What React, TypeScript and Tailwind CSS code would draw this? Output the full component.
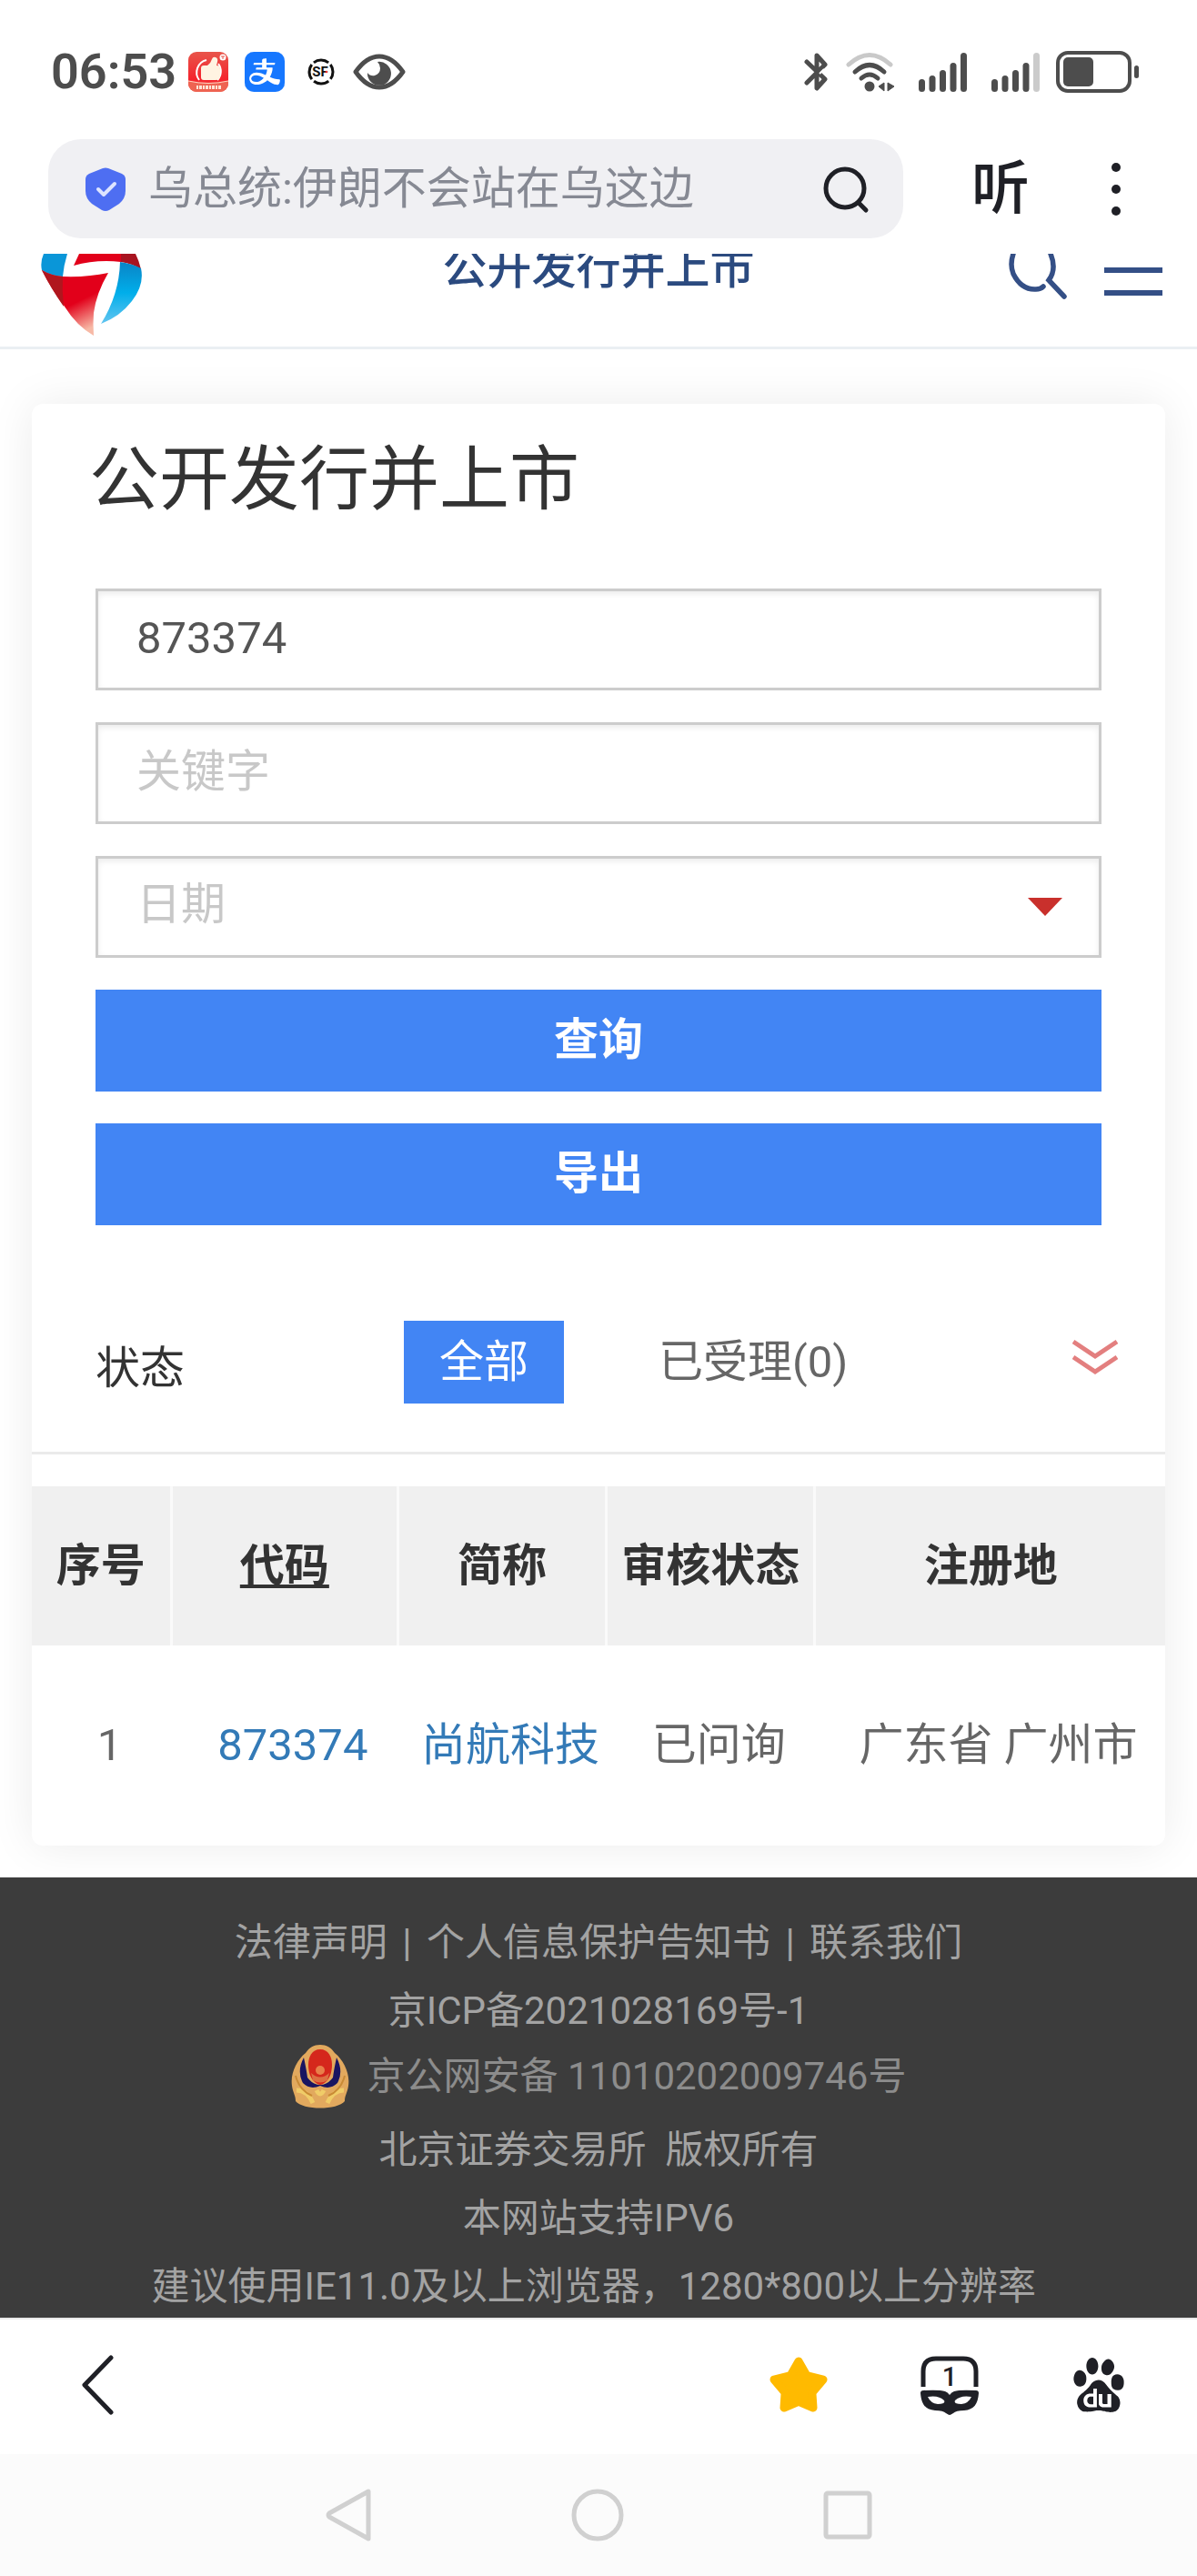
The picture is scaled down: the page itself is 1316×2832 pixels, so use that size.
import { useState } from "react";
import { AiFillAlipaySquare } from "react-icons/ai";
import { SiBaidu } from "react-icons/si";

function RewardsAppIcon() {
  return (
    <svg className="size-11" viewBox="0 0 44 44">
      <defs>
        <linearGradient id="rewards" x1="0" y1="0" x2="0" y2="1">
          <stop offset="0" stopColor="#e8554a" />
          <stop offset="0.7" stopColor="#f5222d" />
          <stop offset="1" stopColor="#f0604e" />
        </linearGradient>
      </defs>
      <rect width="44" height="44" rx="9" fill="url(#rewards)" />
      <path d="M0 32q22 5 44 0v3a9 9 0 0 1-9 9H9a9 9 0 0 1-9-9z" fill="#ee6352" />
      <path d="M0 32q22 5 44 0" stroke="#ffd9c4" fill="none" />
      <path d="M12 31a14 14 0 0 1 8-22M33 13a14 14 0 0 1-1 18" stroke="#fff" strokeWidth="2" fill="none" />
      <path
        d="M14 18q0-3 3-3h4q4-3 5-7 1-3 4-2 3 1 2 5l-1 4q4 0 4 4v7q0 5-5 5H17q-3 0-3-3z"
        fill="#fff3e2"
      />
      <circle cx="38" cy="6" r="3.5" fill="#fff" />
      <path d="M36 5h4M38 5v3" stroke="#e8554a" />
      <path d="M9 39h27" stroke="#ffe6d8" strokeWidth="4" strokeDasharray="2 1 3 1" />
    </svg>
  );
}

function StatusBar() {
  return (
    <div className="flex h-[153px] items-start justify-between pl-14 pr-[63px] pt-[56px] text-[#4d4d4d]">
      <div className="flex h-[46px] items-center">
        <span className="w-[151px] text-[54px] font-semibold leading-[46px]">06:53</span>
        <RewardsAppIcon />
        <span className="ml-[18px] flex size-11 items-center justify-center overflow-hidden rounded-[10px] bg-[#1677ff]">
          <AiFillAlipaySquare className="size-[60px] shrink-0 bg-white text-[#1677ff]" />
        </span>
        <svg className="ml-[25px] size-[30px]" viewBox="0 0 30 30">
          <circle
            cx="15"
            cy="15"
            r="13"
            fill="none"
            stroke="#111"
            strokeWidth="3"
            strokeDasharray="17.4 3"
            strokeDashoffset="9"
          />
          <text x="14" y="20" fontSize="15" fontWeight="700" textAnchor="middle" fill="#111">
            SF
          </text>
          <circle cx="21" cy="15" r="1.3" fill="#e33" />
        </svg>
        <svg className="ml-5 h-10 w-[58px]" viewBox="0 0 58 40">
          <path
            d="M3 20Q15 3 29 3t26 17Q43 37 29 37T3 20z"
            fill="none"
            stroke="currentColor"
            strokeWidth="5"
            strokeLinejoin="round"
          />
          <path d="M27 9a13 13 0 1 1-11 12q3 4 8 3 6-2 6-8 0-4-3-7z" fill="currentColor" />
        </svg>
      </div>

      <div className="flex h-[46px] items-center">
        <svg className="h-11 w-7" viewBox="0 0 28 44">
          <path
            d="M3 11l20 19-9 10V4l9 10L3 34"
            fill="none"
            stroke="currentColor"
            strokeWidth="5"
            strokeLinecap="round"
            strokeLinejoin="round"
          />
          <path d="M17 24l5-5" stroke="#fff" strokeWidth="2" />
        </svg>
        <svg className="ml-[17px] h-11 w-14" viewBox="0 0 56 44">
          <g fill="none" strokeWidth="5" strokeLinecap="round">
            <path d="M4 14q23-21 46 0" stroke="#c9c9c9" />
            <path d="M11 22q16-15 32 0" stroke="currentColor" />
            <path d="M18 29q9-8 18 0" stroke="currentColor" />
          </g>
          <circle cx="27" cy="38" r="5.5" fill="currentColor" />
          <path d="M43 34v9l-6-5zM47 34v9l7-5z" fill="currentColor" stroke="currentColor" />
        </svg>
        <Signal className="ml-[25px]" weak={false} />
        <Signal className="ml-[26px]" weak />
        <svg className="ml-[17px] h-[46px] w-[92px]" viewBox="0 0 92 46">
          <rect x="2" y="2" width="79" height="42" rx="11" fill="none" stroke="currentColor" strokeWidth="4" />
          <rect x="8" y="7" width="33" height="32" rx="5" fill="currentColor" />
          <rect x="86" y="16" width="5" height="14" rx="2.5" fill="currentColor" />
        </svg>
      </div>
    </div>
  );
}

function Signal({ className, weak }: { className: string; weak: boolean }) {
  return (
    <svg className={`h-[43px] w-[54px] ${className}`} viewBox="0 0 54 43" fill="currentColor">
      <rect x="0" y="29" width="7" height="14" rx="3.5" />
      <rect x="11.5" y="25" width="7" height="18" rx="3.5" />
      <rect x="23" y="19" width="7" height="24" rx="3.5" />
      <rect x="34.5" y="11" width="7" height="32" rx="3.5" />
      <rect x="46" y="0" width="7" height="43" rx="3.5" fill={weak ? "#cbcbcb" : "currentColor"} />
    </svg>
  );
}

function AddressBar() {
  return (
    <div className="flex h-[126px] items-start pl-[53px] pr-[78px]">
      <div className="flex h-[109px] flex-1 items-center rounded-[36px] bg-[#f0f0f3] pl-10 pr-9">
        <svg className="h-[50px] w-[46px]" viewBox="0 0 46 50">
          <path
            d="M20 2q3-1 6 0l15 6q4 2 4 6v13q0 8-7 14l-11 7q-4 2-8 0L8 41q-7-6-7-14V14q0-4 4-6z"
            fill="#4e6ef2"
          />
          <path
            d="M15 25l6 6 12-12"
            fill="none"
            stroke="#dde4ff"
            strokeWidth="4"
            strokeLinecap="round"
            strokeLinejoin="round"
          />
        </svg>
        <input
          type="text"
          aria-label="搜索或输入网址"
          defaultValue="乌总统:伊朗不会站在乌这边"
          className="ml-6 min-w-0 flex-1 bg-transparent text-[49px] leading-[64px] text-[#868993] outline-none"
        />
        <button type="button" aria-label="搜索">
          <svg className="size-[54px]" viewBox="0 0 54 54" fill="none" stroke="#1f2026" strokeWidth="5">
            <circle cx="26" cy="26" r="21" />
            <path d="M41 42l8 8" strokeLinecap="round" />
          </svg>
        </button>
      </div>
      <button type="button" className="ml-[75px] h-[109px] text-[64px] font-medium leading-[109px] text-[#1f2026]">
        听
      </button>
      <button type="button" aria-label="更多" className="ml-20 flex h-[109px] w-[26px] items-center">
        <svg className="h-[60px] w-[26px]" viewBox="0 0 26 60" fill="#1f2026">
          <circle cx="15" cy="6" r="5" />
          <circle cx="15" cy="30" r="5" />
          <circle cx="15" cy="54" r="5" />
        </svg>
      </button>
    </div>
  );
}

// The page is scrolled a little, so the top of the site header is cut off.
function SiteHeader() {
  return (
    <header className="flex h-[105px] items-start justify-between overflow-hidden border-b-[3px] border-[#eaeff3] pl-[45px] pr-[38px] text-[#2b4a7f]">
      <a href="#" aria-label="首页" className="w-[162px]">
        <svg className="h-[90px] w-[112px]" viewBox="0 0 112 90">
          <defs>
            <linearGradient id="logoRed" x1="0" y1="0" x2="0.5" y2="1">
              <stop offset="0.6" stopColor="#e2001a" />
              <stop offset="1" stopColor="#f7b9a6" />
            </linearGradient>
            <linearGradient id="logoBlue" x1="0" y1="0" x2="0" y2="1">
              <stop offset="0" stopColor="#0a84c6" />
              <stop offset="0.5" stopColor="#00aeea" />
              <stop offset="1" stopColor="#63c5f0" />
            </linearGradient>
          </defs>
          <path d="M3 0h26q-4 13-5 25Q10 24 1 18-1 9 3 0z" fill="#0a96d8" />
          <path d="M1 18q10 6 23 7 27 1 50-4-13 22-16 44-1 12 0 25Q39 79 26 58 11 38 1 18z" fill="url(#logoRed)" />
          <path d="M1 18q10 6 23 7-1 16 1 33Q11 38 1 18z" fill="#b0161e" />
          <path d="M42 0h46v9Q61 6 36 13z" fill="#e2001a" />
          <path d="M88 0h16q4 8 6 17-9-6-22-8z" fill="#a81420" />
          <path d="M87 9q14 2 23 7 4 18-10 36-13 17-34 25Q86 45 87 9z" fill="url(#logoBlue)" />
        </svg>
      </a>
      <h2 className="-mt-2 text-[49px] font-medium leading-[50px]">公开发行并上市</h2>
      <div className="flex w-[169px] justify-between">
        <button type="button" aria-label="站内搜索">
          <svg className="h-[50px] w-[66px]" viewBox="0 0 66 50" fill="none" stroke="#344f86" strokeWidth="5.5" strokeLinecap="round">
            <path d="M5 0Q1 12 5 22q9 18 25 17 5 0 8-3M46 0q7 17-2 29l17 18" />
          </svg>
        </button>
        <button type="button" aria-label="菜单">
          <svg className="h-[50px] w-16" viewBox="0 0 64 50" stroke="#344f86" strokeWidth="6">
            <path d="M0 18h64M0 43h64" />
          </svg>
        </button>
      </div>
    </header>
  );
}

function SearchForm() {
  const [code, setCode] = useState("873374");
  const [keyword, setKeyword] = useState("");
  const [date, setDate] = useState("");

  const field =
    "block h-28 w-full appearance-none border-[3px] border-[#ccc] bg-white px-[42px] pb-1 text-[49px] text-[#555] shadow-[inset_0_3px_6px_rgba(0,0,0,0.08)] outline-none placeholder:text-[#c8c8c8]";
  const action = "h-28 bg-[#4285f4] text-[49px] font-bold text-white";

  return (
    <form className="mt-[77px] flex flex-col gap-[35px] px-[70px]" onSubmit={(e) => e.preventDefault()}>
      <input
        type="text"
        aria-label="代码"
        className={field}
        value={code}
        onChange={(e) => setCode(e.target.value)}
      />
      <input
        type="text"
        aria-label="关键字"
        placeholder="关键字"
        className={field}
        value={keyword}
        onChange={(e) => setKeyword(e.target.value)}
      />
      <div className="relative">
        <select
          aria-label="日期"
          className={`${field} ${date ? "" : "text-[#c8c8c8]"}`}
          value={date}
          onChange={(e) => setDate(e.target.value)}
        >
          <option value="">日期</option>
        </select>
        <svg
          className="pointer-events-none absolute right-[42px] top-[45px] h-[21px] w-10"
          viewBox="0 0 40 21"
          fill="#c9302c"
        >
          <path d="M1 1h38L20 21z" />
        </svg>
      </div>
      <button type="submit" className={action}>
        查询
      </button>
      <button type="button" className={action}>
        导出
      </button>
    </form>
  );
}

function StatusFilter() {
  return (
    <div className="mt-[105px] grid h-[147px] grid-cols-[339fr_280fr_505fr] items-start border-b-[3px] border-[#eaeaea] pl-[70px] pr-[52px] text-[49px]">
      <span className="leading-[106px] text-[#333]">状态</span>
      <button type="button" className="w-44 justify-self-start bg-[#4285f4] leading-[91px] text-white">
        全部
      </button>
      <div className="flex items-start justify-between">
        <button type="button" className="leading-[91px] text-[#666]">
          已受理(0)
        </button>
        <button type="button" aria-label="展开" className="mt-5">
          <svg className="h-10 w-[50px]" viewBox="0 0 50 40" fill="none" stroke="#e37f7f" strokeWidth="5">
            <path d="M1 3l24 16L49 3M1 20l24 16 24-16" />
          </svg>
        </button>
      </div>
    </div>
  );
}

function ResultTable() {
  const th = "border-r-[3px] border-[#fafafa] last:border-r-0";
  const td = "pl-[18px]";

  return (
    <table className="mt-[35px] w-full table-fixed text-center text-[49px] text-[#666]">
      <colgroup>
        <col className="w-[12.3%]" />
        <col className="w-[20%]" />
        <col className="w-[18.4%]" />
        <col className="w-[18.4%]" />
        <col />
      </colgroup>
      <thead>
        <tr className="h-[175px] whitespace-nowrap bg-[#f0f0f0] text-[#333]">
          <th className={th}>序号</th>
          <th className={th}>
            <button type="button" className="underline underline-offset-4">
              代码
            </button>
          </th>
          <th className={th}>简称</th>
          <th className={th}>审核状态</th>
          <th className={th}>注册地</th>
        </tr>
      </thead>
      <tbody>
        <tr className="h-[220px] whitespace-nowrap">
          <td className={td}>1</td>
          <td className={td}>
            <a href="#" className="text-[#337ab7]">
              873374
            </a>
          </td>
          <td className={td}>
            <a href="#" className="text-[#337ab7]">
              尚航科技
            </a>
          </td>
          <td className={td}>已问询</td>
          <td className={td}>广东省 广州市</td>
        </tr>
      </tbody>
    </table>
  );
}

function PoliceBadge() {
  return (
    <svg className="h-[70px] w-16" viewBox="0 0 64 70">
      <path d="M32 0c-7 0-12 3-16 9C6 17-1 32 1 45c1 8 4 10 4 17 8 10 46 10 54 0 0-7 3-9 4-17 2-13-5-28-15-36C44 3 39 0 32 0z" fill="#e2a95e" />
      <path d="M14 14q-8 15-1 28 8 8 19 3 11 5 19-3 7-13-1-28-3 14-4 22-6 8-14 8t-14-8q-1-8-4-22z" fill="#191561" />
      <path d="M32 5c-9 0-13 8-13 17 0 10 4 20 13 22 9-2 13-12 13-22C45 13 41 5 32 5z" fill="#d5271c" />
      <circle cx="32" cy="28" r="5" fill="#e8804a" />
      <path d="M22 31q10 9 20 0l-2 8q-8 5-16 0z" fill="#dd6f42" />
      <path d="M6 50q12 0 18 14M58 50q-12 0-18 14M28 50q4 8 8 0" stroke="#f0cc68" strokeWidth="5" fill="none" />
      <path d="M5 34q4 16 18 22M59 34q-4 16-18 22" stroke="#c98a35" strokeWidth="2" fill="none" />
    </svg>
  );
}

function SiteFooter() {
  return (
    <footer className="mt-[35px] h-[484px] overflow-hidden whitespace-nowrap bg-[#3c3c3c] pt-[34px] text-center text-[42px] leading-[75px] text-[#a3a3a3]">
      <p>
        <a href="#">法律声明</a> <span className="mx-1.5">|</span> <a href="#">个人信息保护告知书</a>{" "}
        <span className="mx-1.5">|</span> <a href="#">联系我们</a>
      </p>
      <p>
        <a href="#">京ICP备2021028169号-1</a>
      </p>
      <a href="#" className="flex h-[78px] items-start justify-center gap-5 text-[#8c8c8c]">
        <PoliceBadge />
        <span className="leading-[70px]">京公网安备 11010202009746号</span>
      </a>
      <p>北京证券交易所&nbsp; 版权所有</p>
      <p>本网站支持IPV6</p>
      <p>建议使用IE11.0及以上浏览器，1280*800以上分辨率&nbsp;</p>
    </footer>
  );
}

function BrowserToolbar() {
  return (
    <nav className="flex h-[150px] items-center justify-between border-t-2 border-[#e8e8e8] bg-white pb-1 pl-[88px] pr-[78px] text-[#1f2026]">
      <button type="button" aria-label="后退">
        <svg
          className="h-[66px] w-[38px]"
          viewBox="0 0 38 66"
          fill="none"
          stroke="currentColor"
          strokeWidth="5"
          strokeLinecap="round"
          strokeLinejoin="round"
        >
          <path d="M34 3L5 33l29 30" />
        </svg>
      </button>
      <div className="flex items-center gap-[101px]">
        <button type="button" aria-label="收藏">
          <svg className="size-16" viewBox="0 0 64 64" fill="#ffba00" stroke="#ffba00" strokeWidth="9" strokeLinejoin="round">
            <path d="M32 6l8 14q1 2 3 2l16 4-11 13q-1 1-1 3l1 15-14-6q-2-1-4 0l-14 6 1-15q0-2-1-3L5 26l16-4q2 0 3-2z" />
          </svg>
        </button>
        <button type="button" aria-label="标签页">
          <svg className="size-[66px]" viewBox="0 0 66 66">
            <path d="M4 35V18Q4 4 18 4h30q14 0 14 14v17" fill="none" stroke="currentColor" strokeWidth="5" />
            <text x="33" y="34" fontSize="29" fontWeight="500" textAnchor="middle" fill="currentColor">
              1
            </text>
            <path
              fillRule="evenodd"
              d="M4 39q18-1 24 1 3 1 5 4 2-3 5-4 6-2 24-1 3 0 3 3c-1 12-5 18-16 19q-9 0-12 3-3 2-4 2t-4-2q-3-3-12-3C6 60 2 54 1 42q0-3 3-3zM9 46q3 7 11 8 9 0 7-4-6-6-18-4zM57 46q-3 7-11 8-9 0-7-4 6-6 18-4z"
              fill="currentColor"
            />
          </svg>
        </button>
        <button type="button" aria-label="百度首页">
          <SiBaidu className="size-[60px]" />
        </button>
      </div>
    </nav>
  );
}

function SystemNav() {
  return (
    <nav className="flex h-[134px] items-center justify-center gap-[218px] bg-[#fbfbfb] text-[#d0d0d0]">
      <button type="button" aria-label="返回">
        <svg className="h-[60px] w-[52px]" viewBox="0 0 52 60" fill="none" stroke="currentColor" strokeWidth="5" strokeLinejoin="round">
          <path d="M48 4v52L5 32q-2-2 0-4z" />
        </svg>
      </button>
      <button type="button" aria-label="主页">
        <svg className="size-[60px]" viewBox="0 0 60 60" fill="none" stroke="currentColor" strokeWidth="5">
          <circle cx="30" cy="30" r="26" />
        </svg>
      </button>
      <button type="button" aria-label="最近任务">
        <svg className="h-[60px] w-[54px]" viewBox="0 0 54 60" fill="none" stroke="currentColor" strokeWidth="5">
          <rect x="3" y="6" width="48" height="48" rx="2" />
        </svg>
      </button>
    </nav>
  );
}

export default function App() {
  return (
    <div className="bg-white font-[Roboto,'Noto_Sans_CJK_SC',sans-serif]">
      <StatusBar />
      <AddressBar />
      <SiteHeader />
      <main className="px-[35px] pt-[60px]">
        <section className="rounded-xl bg-white pt-[42px] shadow-[0_0_50px_rgba(0,0,0,0.08)]">
          <h1 className="px-[63px] text-[77px] leading-[84px] text-[#333]">公开发行并上市</h1>
          <SearchForm />
          <StatusFilter />
          <ResultTable />
        </section>
      </main>
      <SiteFooter />
      <BrowserToolbar />
      <SystemNav />
    </div>
  );
}
